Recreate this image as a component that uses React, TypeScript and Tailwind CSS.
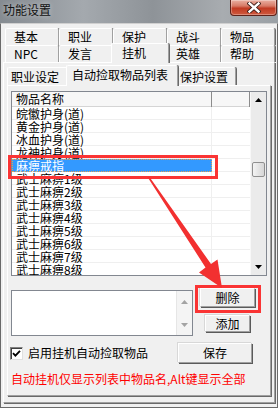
import React from "react";

const FONT = "font-['Noto_Sans_CJK_SC','Noto_Sans',sans-serif]";

function CloseButton() {
  return (
    <div className="w-[47px] h-[16px] rounded-b-[4px] border border-t-0 border-[#5e2219] bg-[linear-gradient(to_bottom,#eab0a2_0%,#d77a66_40%,#c13a22_55%,#cf5a3f_100%)] shadow-[inset_0_0_0_1px_rgba(255,255,255,0.3)] flex items-center justify-center">
      <svg width="14" height="11" viewBox="0 0 14 11">
        <path d="M2.5 1.5 L11.5 9.5 M11.5 1.5 L2.5 9.5" stroke="#3b1c16" strokeWidth="4.2" strokeLinecap="square" />
        <path d="M2.5 1.5 L11.5 9.5 M11.5 1.5 L2.5 9.5" stroke="#ffffff" strokeWidth="2.4" strokeLinecap="square" />
      </svg>
    </div>
  );
}

function MainTab({ label, selected }: { label: string; selected?: boolean }) {
  if (selected) {
    return (
      <div className="relative z-10 w-[58px] -mx-[2px] h-[20px] -mb-[1px] bg-[#f0f0f0] border border-b-0 border-t-white border-l-white border-r-[#a0a0a0] rounded-t-[2px] shadow-[1px_0_0_#696969] pl-[10px] leading-[17px] text-[12px]">
        {label}
      </div>
    );
  }
  return (
    <div className="w-[54px] h-[17px] bg-[#f0f0f0] border border-b-0 border-t-white border-l-white border-r-[#a0a0a0] rounded-t-[2px] shadow-[1px_0_0_#696969] pl-[8px] leading-[16px] text-[12px]">
      {label}
    </div>
  );
}

function SubTab({ label, w, selected }: { label: string; w: string; selected?: boolean }) {
  if (selected) {
    return (
      <div className={`relative z-10 ${w} -mx-[2px] h-[21px] -mb-[1px] bg-[#f0f0f0] border border-b-0 border-t-white border-l-white border-r-[#a0a0a0] rounded-t-[2px] shadow-[1px_0_0_#696969] pl-[5px] leading-[18px] text-[12px] whitespace-nowrap`}>
        {label}
      </div>
    );
  }
  return (
    <div className={`${w} h-[18px] bg-[#f0f0f0] border border-b-0 border-t-white border-l-white border-r-[#a0a0a0] rounded-t-[2px] shadow-[1px_0_0_#696969] pl-[3px] leading-[17px] text-[12px] whitespace-nowrap`}>
      {label}
    </div>
  );
}

function UpTri({ color = "#000" }: { color?: string }) {
  return (
    <svg width="7" height="4" viewBox="0 0 7 4">
      <path d="M3.5 0 L7 4 L0 4 Z" fill={color} />
    </svg>
  );
}
function DownTri({ color = "#000" }: { color?: string }) {
  return (
    <svg width="7" height="4" viewBox="0 0 7 4">
      <path d="M0 0 L7 0 L3.5 4 Z" fill={color} />
    </svg>
  );
}

function Button({ label, cls }: { label: string; cls: string }) {
  return (
    <div className={`${cls} bg-[#f0f0f0] border border-t-white border-l-white border-r-[#a0a0a0] border-b-[#a0a0a0] shadow-[1px_1px_0_#5a5a5a,-1px_-1px_0_#d8d8d8] flex items-center justify-center text-[12px] leading-[14px]`}>
      {label}
    </div>
  );
}

const ROWS = [
  "皖徽护身(道)",
  "黄金护身(道)",
  "冰血护身(道)",
  "龙神护身(道)",
  "麻痹戒指",
  "武士麻痹1级",
  "武士麻痹2级",
  "武士麻痹3级",
  "武士麻痹4级",
  "武士麻痹5级",
  "武士麻痹6级",
  "武士麻痹7级",
  "武士麻痹8级",
];

export default function App() {
  return (
    <div className={`relative w-[278px] h-[408px] overflow-hidden flex flex-col ${FONT} text-black`}>
      {/* Title bar */}
      <div className="h-[23px] shrink-0 flex justify-between bg-[linear-gradient(to_right,#858b91_0%,#a4a9ae_30%,#8e9398_55%,#a8acb0_80%,#9aa0a5_100%)]">
        <span className="pl-[3px] pt-[2px] text-[12px] leading-[15px] text-[#121212] [text-shadow:0_0_5px_rgba(255,255,255,0.55)]">
          功能设置
        </span>
        <div className="pr-[1px]">
          <CloseButton />
        </div>
      </div>

      {/* Window body */}
      <div className="flex-1 flex flex-col bg-[#f0f0f0] border border-[#6a6a6a] border-t-[#d0d0d0] pl-[2px] pr-[2px] pt-[4px] pb-[4px]">
        {/* Main tabs */}
        <div className="flex flex-col pl-[2px]">
          <div className="flex h-[17px]">
            <MainTab label="基本" />
            <MainTab label="职业" />
            <MainTab label="保护" />
            <MainTab label="战斗" />
            <MainTab label="物品" />
          </div>
          <div className="flex h-[17px] items-end">
            <MainTab label="NPC" />
            <MainTab label="发言" />
            <MainTab label="挂机" selected />
            <MainTab label="英雄" />
            <MainTab label="帮助" />
          </div>
        </div>

        {/* Main panel */}
        <div className="flex-1 flex flex-col border border-t-white border-l-white border-r-[#a0a0a0] border-b-[#a0a0a0] shadow-[1px_1px_0_#696969] px-[3px] pt-[4px] pb-[6px]">
          {/* Sub tabs */}
          <div className="flex h-[18px] items-end">
            <SubTab label="职业设定" w="w-[61px]" />
            <SubTab label="自动捡取物品列表" w="w-[112px]" selected />
            <SubTab label="保护设置" w="w-[60px]" />
          </div>

          {/* Sub panel */}
          <div className="flex-1 flex flex-col border border-t-white border-l-white border-r-[#a0a0a0] border-b-[#a0a0a0] shadow-[1px_1px_0_#696969] px-[3px] pt-[5px]">
            {/* List view */}
            <div className="h-[185px] flex border border-[#828790] bg-white">
              <div className="flex-1 flex flex-col">
                <div className="h-[15px] shrink-0 flex bg-[#f7f7f7] shadow-[inset_0_-1px_0_#d5d5d5] text-[12px] leading-[14px]">
                  <div className="w-[200px] pl-[4px] shadow-[inset_-1px_0_0_#8c8c8c]">物品名称</div>
                  <div className="flex-1 shadow-[inset_-1px_0_0_#8c8c8c]"></div>
                </div>
                <div className="flex-1 flex flex-col overflow-hidden">
                  {ROWS.map((r, i) => {
                    const sel = i === 4;
                    return (
                      <div key={r} className="h-[13px] shrink-0 flex shadow-[inset_0_-1px_0_#efefef] text-[12px] leading-[13px]">
                        <div
                          className={
                            sel
                              ? "w-[200px] bg-[#3399ff] text-white pl-[4px] outline-1 outline-dotted outline-[#e8a050] -outline-offset-1"
                              : "w-[200px] pl-[4px] shadow-[inset_-1px_0_0_#efefef]"
                          }
                        >
                          {r}
                        </div>
                        <div className="flex-1"></div>
                      </div>
                    );
                  })}
                </div>
              </div>
              {/* Scrollbar */}
              <div className="w-[16px] shrink-0 flex flex-col bg-[#ebebeb] border-l border-[#f8f8f8]">
                <div className="h-[16px] flex items-center justify-center">
                  <UpTri />
                </div>
                <div className="mt-[54px] mx-[1px] h-[15px] rounded-[2px] border border-[#8f8f8f] bg-[linear-gradient(to_right,#f3f3f3,#e4e4e4_50%,#d6d6d6)]"></div>
                <div className="flex-1"></div>
                <div className="h-[16px] flex items-center justify-center">
                  <DownTri />
                </div>
              </div>
            </div>

            {/* Lower: edit box + buttons */}
            <div className="flex items-start mt-[14px]">
              <div className="w-[182px] h-[46px] flex border border-[#828790] bg-white">
                <div className="flex-1"></div>
                <div className="w-[16px] flex flex-col justify-between bg-[#f4f4f4] border-l border-[#e6e6e6]">
                  <div className="h-[17px] flex items-center justify-center pt-[4px]">
                    <UpTri color="#a3a3a3" />
                  </div>
                  <div className="h-[17px] flex items-center justify-center pb-[4px]">
                    <DownTri color="#a3a3a3" />
                  </div>
                </div>
              </div>
              <div className="flex-1 flex flex-col items-center pr-[5px]">
                <Button label="删除" cls="w-[55px] h-[19px] -mt-[2px]" />
                <Button label="添加" cls="w-[45px] h-[17px] mt-[8px]" />
              </div>
            </div>

            {/* Checkbox row */}
            <div className="flex items-center mt-[7px] h-[20px]">
              <div className="-ml-[1px] w-[13px] h-[13px] bg-white border border-t-[#808080] border-l-[#808080] border-r-[#e0e0e0] border-b-[#e0e0e0] shadow-[inset_1px_1px_0_#404040] flex items-center justify-center">
                <svg width="9" height="9" viewBox="0 0 9 9">
                  <path d="M1 4.2 L3.4 6.6 L8 1.8" stroke="#000" strokeWidth="1.8" fill="none" />
                </svg>
              </div>
              <span className="ml-[5px] text-[12px] leading-[14px]">启用挂机自动捡取物品</span>
              <div className="ml-auto mr-[15px]">
                <Button label="保存" cls="w-[74px] h-[20px]" />
              </div>
            </div>

            {/* Red note */}
            <div className="mt-[9px] text-[12px] leading-[14px] text-[#ff0000] whitespace-nowrap">
              自动挂机仅显示列表中物品名,Alt键显示全部
            </div>
          </div>
        </div>
      </div>

      {/* Annotation overlays */}
      <div className="absolute left-[8px] top-[155px] w-[210px] h-[24px] border-[3px] border-[#fa3434] pointer-events-none"></div>
      <div className="absolute left-[195px] top-[285px] w-[66px] h-[28px] border-[3px] border-[#fa3434] pointer-events-none"></div>
      <svg className="absolute left-0 top-0 pointer-events-none" width="278" height="408" viewBox="0 0 278 408">
        <polygon
          points="147.5,177 149.5,177 211,264 217.5,259.5 222,288 199,272.5 205.5,267.5"
          fill="#f23030"
        />
      </svg>
    </div>
  );
}
